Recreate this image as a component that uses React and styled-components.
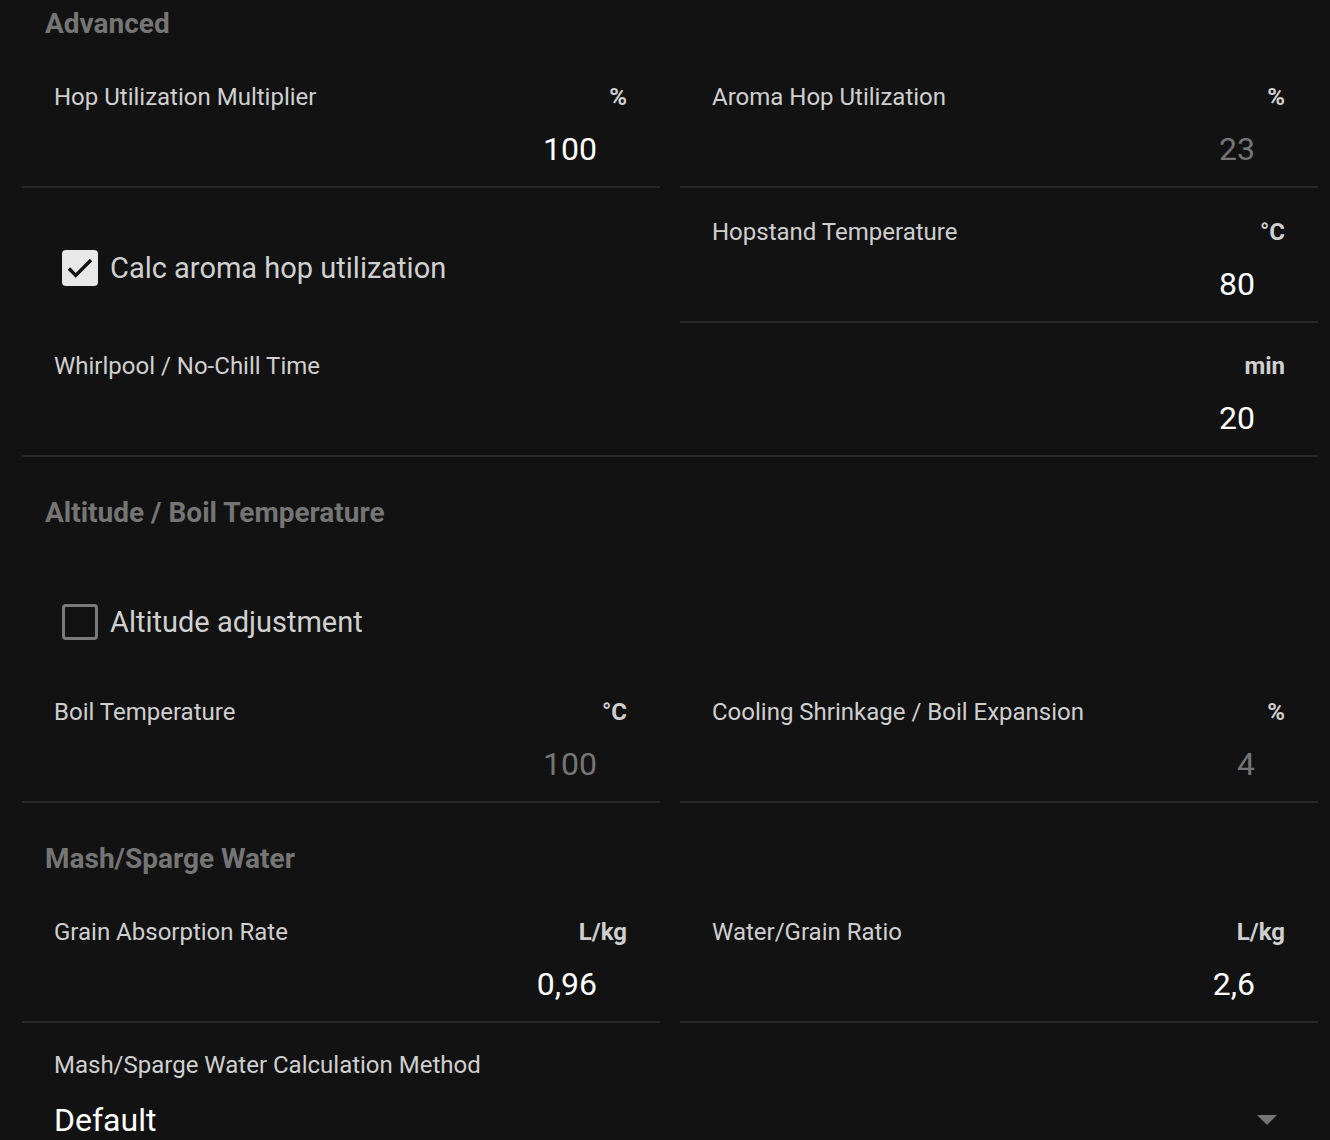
import styled, { createGlobalStyle } from "styled-components";

const Global = createGlobalStyle`
  html, body {
    margin: 0;
    padding: 0;
    background: #121212;
  }
  body {
    font-family: Roboto, "Noto Sans", "Liberation Sans", sans-serif;
    color: #cfcfcf;
  }
`;

const Page = styled.div`
  display: grid;
  grid-template-columns: 1fr 1fr;
  column-gap: 20px;
  padding: 0 12px 0 22px;
  min-height: 1140px;
  box-sizing: border-box;
`;

const SectionTitle = styled.h2`
  grid-column: 1 / -1;
  margin: ${(p) => (p.$first ? "0" : "30px")} 0 0;
  padding: 8px 0 14px 23px;
  font-size: 28px;
  line-height: 32px;
  font-weight: 700;
  color: #757575;
`;

const Field = styled.div`
  grid-column: ${(p) => (p.$wide ? "1 / -1" : "auto")};
  display: flex;
  flex-direction: column;
  height: 132px;
  padding: 27px 0 0;
  box-sizing: border-box;
  border-bottom: 2px solid #282828;
`;

const LabelRow = styled.div`
  display: flex;
  justify-content: space-between;
  align-items: center;
  padding: 0 33px 0 32px;
  height: 28px;
  font-size: 24px;
  line-height: 28px;
  color: #cfcfcf;
`;

const Unit = styled.span`
  font-weight: 700;
`;

const Value = styled.div`
  margin-top: 20px;
  padding-right: 63px;
  text-align: right;
  font-size: 32px;
  line-height: 36px;
  color: ${(p) => (p.$disabled ? "#757575" : "#ffffff")};
`;

const CheckCell = styled.label`
  display: flex;
  align-items: flex-start;
  gap: 12px;
  min-height: 123px;
  padding: 59px 0 0 40px;
  box-sizing: border-box;
  font-size: 29px;
  line-height: 36px;
  color: #d0d0d0;
  cursor: pointer;
`;

const Box = styled.span`
  display: flex;
  align-items: center;
  justify-content: center;
  width: 36px;
  height: 36px;
  box-sizing: border-box;
  border-radius: 4px;
  background: ${(p) => (p.$checked ? "#e8e8e8" : "transparent")};
  border: ${(p) => (p.$checked ? "none" : "3px solid #7a7a7a")};
`;

const Spacer = styled.div``;

const SelectField = styled.div`
  grid-column: 1 / -1;
  padding-top: 25px;
`;

const SelectLabel = styled.div`
  padding-left: 32px;
  font-size: 24px;
  line-height: 28px;
  color: #cfcfcf;
`;

const SelectValue = styled.div`
  display: flex;
  justify-content: space-between;
  align-items: center;
  margin-top: 23px;
  padding: 0 41px 0 32px;
  font-size: 32px;
  line-height: 36px;
  color: #ffffff;
`;

const Arrow = styled.span`
  width: 0;
  height: 0;
  border-left: 10px solid transparent;
  border-right: 10px solid transparent;
  border-top: 10px solid #757575;
`;

const NumberField = ({ label, unit, value, disabled, wide }) => (
  <Field $wide={wide}>
    <LabelRow>
      <span>{label}</span>
      <Unit>{unit}</Unit>
    </LabelRow>
    <Value $disabled={disabled}>{value}</Value>
  </Field>
);

const Checkbox = ({ checked, children }) => (
  <CheckCell>
    <Box $checked={checked}>
      {checked && (
        <svg width="34" height="34" viewBox="0 0 24 24">
          <path d="M4.2 12.4l4.8 4.8L19.8 6.4" fill="none" stroke="#111" strokeWidth="2.4" />
        </svg>
      )}
    </Box>
    <span>{children}</span>
  </CheckCell>
);

export default function App() {
  return (
    <>
      <Global />
      <Page>
        <SectionTitle $first>Advanced</SectionTitle>
        <NumberField label="Hop Utilization Multiplier" unit="%" value="100" />
        <NumberField label="Aroma Hop Utilization" unit="%" value="23" disabled />
        <Checkbox checked>Calc aroma hop utilization</Checkbox>
        <NumberField label="Hopstand Temperature" unit="°C" value="80" />
        <NumberField label="Whirlpool / No-Chill Time" unit="min" value="20" wide />

        <SectionTitle>Altitude / Boil Temperature</SectionTitle>
        <Checkbox>Altitude adjustment</Checkbox>
        <Spacer />
        <NumberField label="Boil Temperature" unit="°C" value="100" disabled />
        <NumberField label="Cooling Shrinkage / Boil Expansion" unit="%" value="4" disabled />

        <SectionTitle>Mash/Sparge Water</SectionTitle>
        <NumberField label="Grain Absorption Rate" unit="L/kg" value="0,96" />
        <NumberField label="Water/Grain Ratio" unit="L/kg" value="2,6" />
        <SelectField>
          <SelectLabel>Mash/Sparge Water Calculation Method</SelectLabel>
          <SelectValue>
            <span>Default</span>
            <Arrow />
          </SelectValue>
        </SelectField>
      </Page>
    </>
  );
}
